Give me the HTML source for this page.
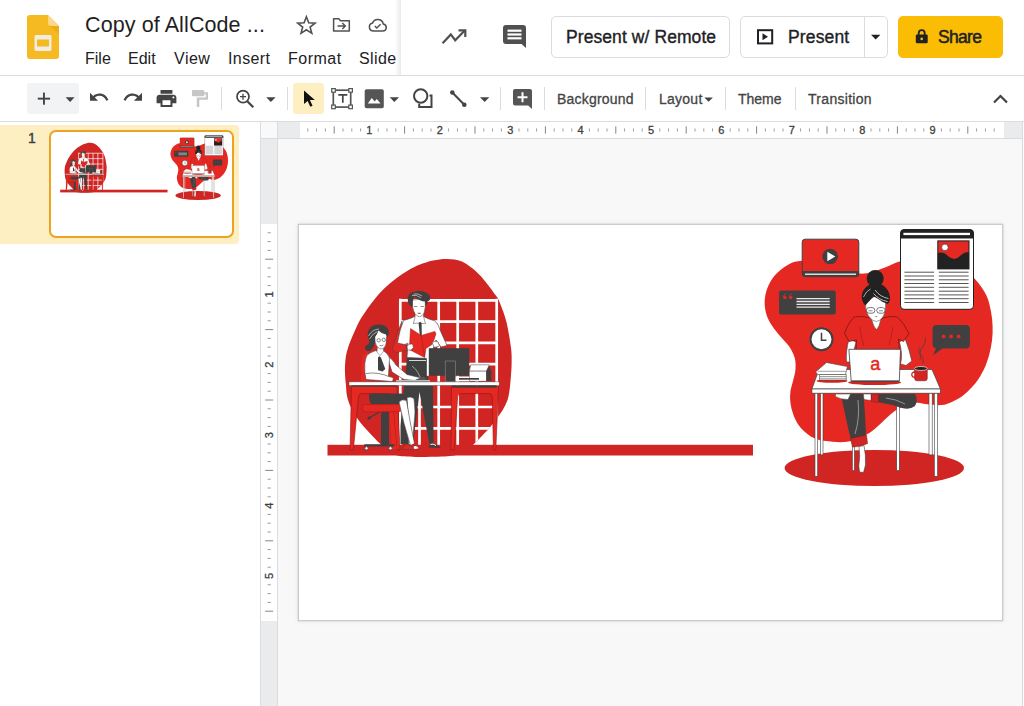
<!DOCTYPE html>
<html>
<head>
<meta charset="utf-8">
<title>Copy of AllCode - Slides</title>
<style>
*{box-sizing:border-box;margin:0;padding:0}
html,body{width:1024px;height:706px;overflow:hidden;background:#fff;font-family:"Liberation Sans",sans-serif;color:#202124}
.abs{position:absolute}
#hdr{position:absolute;left:0;top:0;width:1024px;height:76px;background:#fff;border-bottom:1px solid #dadce0}
#hdrshadow{position:absolute;left:395px;top:0;width:6px;height:75px;background:linear-gradient(to right,rgba(255,255,255,0),rgba(90,90,90,.13))}
.title{position:absolute;left:85px;top:11.500px;font-size:21.500px;line-height:26px;white-space:nowrap;color:#1f1f1f;letter-spacing:.1px}
.menu{position:absolute;top:48.500px;font-size:16px;line-height:20px;white-space:nowrap;color:#202124}
.btn{position:absolute;top:16px;height:42px;border:1px solid #dadce0;border-radius:5px;background:#fff;font-size:17.500px;line-height:41px;white-space:nowrap;color:#202124;-webkit-text-stroke:.35px #202124}
#tb{position:absolute;left:0;top:76px;width:1024px;height:46px;background:#fff;border-bottom:1px solid #dadce0}
.sep{position:absolute;top:11px;width:1px;height:23px;background:#dadce0}
.tbt{position:absolute;top:12.700px;font-size:14px;line-height:20px;color:#444;white-space:nowrap;-webkit-text-stroke:.3px #444}
#film{position:absolute;left:0;top:122px;width:260px;height:584px;background:#fff}
#canvas{position:absolute;left:260px;top:122px;width:763px;height:584px;background:#f8f8f8;border-left:1px solid #dadce0;border-right:1px solid #dadce0;overflow:hidden}
#slide{position:absolute;left:299.200px;top:224.500px;width:703.100px;height:395.600px;background:#fff;box-shadow:0 0 0 1.300px #cbcbcb,0 0 5px 1px rgba(0,0,0,.09)}
</style>
</head>
<body>
<svg style="position:absolute;width:0;height:0" width="0" height="0">
<defs>
<symbol id="slidec" viewBox="299 224 704 396" preserveAspectRatio="none">
<!--SYM-START-->
<clipPath id="blobL"><path id="blobLp" d="M447.2 258.9C451.9 259.0 457.1 259.6 461.3 261.2C465.6 262.8 468.9 265.5 472.7 268.6C476.5 271.7 480.2 275.5 484.0 279.9C487.8 284.2 492.9 291.4 495.3 294.7C497.7 297.9 497.1 296.6 498.4 299.4C499.7 302.2 501.9 307.8 503.3 311.7C504.7 315.6 505.8 319.2 506.7 323.0C507.6 326.8 508.2 330.6 508.9 334.3C509.5 338.0 510.2 341.6 510.6 345.0C511.1 348.4 511.5 350.0 511.6 355.0C511.7 360.0 511.7 367.5 511.0 375.0C510.3 382.5 510.0 392.5 507.5 400.0C505.0 407.5 500.7 413.3 495.8 420.0C490.9 426.7 483.0 435.0 478.0 440.0C473.0 445.0 470.7 447.3 466.0 450.0C461.3 452.7 461.0 455.0 450.0 456.0C439.0 457.0 411.0 457.5 400.0 456.0C389.0 454.5 389.5 451.3 384.0 447.0C378.5 442.7 371.7 435.3 366.9 430.0C362.1 424.7 358.2 420.2 355.0 415.0C351.8 409.8 349.2 404.0 347.7 399.0C346.2 394.0 346.4 389.7 345.9 385.0C345.4 380.3 344.9 375.5 344.9 370.8C344.9 366.1 345.3 360.6 345.9 356.6C346.5 352.6 347.4 349.9 348.3 347.0C349.2 344.1 349.9 342.5 351.3 339.0C352.8 335.5 355.1 329.9 357.0 326.0C358.9 322.1 359.9 320.1 362.7 315.8C365.5 311.5 370.2 304.7 374.0 300.0C377.8 295.3 381.5 291.2 385.3 287.5C389.1 283.8 392.9 280.7 396.7 277.9C400.5 275.1 404.2 272.7 408.0 270.5C411.8 268.3 415.1 266.5 419.3 264.8C423.5 263.1 428.4 261.5 433.0 260.5C437.6 259.5 442.5 258.8 447.2 258.9Z"/></clipPath>
<use href="#blobLp" fill="#d02522"/>
<g clip-path="url(#blobL)" stroke="#fff" stroke-width="2.700" fill="none">
<path d="M400.300 298.700V446M419.500 300V446M438.700 300V446M457.700 300V446M476.800 300V446M496.700 298.700V446"/>
<path d="M399 300.300H498M400 321.600H498M400 342.900H498M400 364.100H498M400 407H498M400 428.300H498"/>
</g>
<rect x="327.500" y="444.800" width="425.500" height="10.700" fill="#d02522"/>
<path d="M361 381.500L361.500 360Q362.500 354 368 352L372 381.500Z" fill="#e62822"/>
<path d="M451.500 386H498.600L495.800 450H493.400L492.300 397Q492.200 393.600 489 393.600H461Q457.800 393.600 457.600 397L454.200 450H451Z" fill="#e62822" stroke="#8a1a17" stroke-width=".6"/>
<path d="M351.500 386H397L400 450H397L392 397Q391.700 393.600 388.500 393.600H362Q358.800 393.600 358.500 397L353.300 450H350Z" fill="#e62822" stroke="#8a1a17" stroke-width=".6"/>
<path d="M391.800 395L396.800 449.500L392 449.500L389.500 412L390.500 395Z" fill="#e62822"/>
<rect x="381" y="410" width="8" height="35.500" fill="#404040"/>
<rect x="364" y="444.300" width="30.500" height="2.300" rx="1" fill="#404040"/>
<circle cx="366.500" cy="448.300" r="1.700" fill="#fff" stroke="#404040" stroke-width=".8"/>
<circle cx="390.500" cy="448.300" r="1.700" fill="#fff" stroke="#404040" stroke-width=".8"/>
<path d="M379.500 412L370 417.500" stroke="#404040" stroke-width="1.200"/>
<ellipse cx="369.300" cy="418" rx="2.200" ry="1.400" transform="rotate(-30 369.300 418)" fill="#404040"/>
<rect x="362" y="404.600" width="40" height="7.200" rx="3.500" fill="#e62822" stroke="#a11a17" stroke-width=".5"/>
<path d="M404 385.500H433L433.600 443.500H429.300L419.500 392L413 444H400.500V426Z" fill="#404040"/>
<path d="M428.600 447.600Q429 443 433 443Q438 445.500 441.300 447.900Z" fill="#404040"/>
<path d="M430.500 444.500Q433 443.200 436 445.500" stroke="#fff" stroke-width="1" fill="none"/>
<path d="M369.500 393.500H401Q405 394 406.500 398.500L404 404H371Q368 399 369.500 393.500Z" fill="#404040"/>
<path d="M407 397.500Q411 396 414 398.500Q416 412 414 425L412.500 444L408.500 444.500Q409 420 407 397.500Z" fill="#fff" stroke="#404040" stroke-width=".6"/>
<path d="M399 402Q402 398.500 406.500 400.500Q409.500 420 414.500 443.500L410.500 445.500Q403 422 399 402Z" fill="#fff" stroke="#404040" stroke-width=".6"/>
<path d="M402.500 449.500Q403 445 407 444.500L412 447Q416 444 419.300 448.500Q415 450.500 411 449.500Z" fill="#e62822" stroke="#404040" stroke-width=".5"/>
<path d="M413.500 446.500Q416.500 445 418.800 448.300L414.500 449.300Z" fill="#fff"/>
<path d="M407 357H428V386H404.500Z" fill="#404040"/>
<path d="M409 360.500H426" stroke="#fff" stroke-width=".8"/>
<path d="M412 366Q419 371 421 381" stroke="#ddd" stroke-width=".6" fill="none"/>
<path d="M402 321Q398 330 395 340L392.500 348.500Q393 352 397 352.500L407 350L406 345L400 344Z" fill="#e62822" stroke="#404040" stroke-width=".5"/>
<path d="M403.500 320.500Q411 318.500 414.500 316.500L423.500 316.500Q428 319 435 321Q438.500 324 440.500 331L447 345.500L441 347L436 340L430 358.500L407 357.500L408 343L404.500 344.500L397.500 343Q399.500 330 403.500 320.500Z" fill="#fff" stroke="#404040" stroke-width=".6"/>
<path d="M415.500 311L415 318L419.500 323L423.500 318V311Z" fill="#fff" stroke="#404040" stroke-width=".4"/>
<path d="M412.300 300Q412 309 415 313.500Q417.500 316.800 419.500 316.800Q422 316.800 424 313Q425.800 308 425.300 299Z" fill="#fff" stroke="#404040" stroke-width=".5"/>
<path d="M414 306.500h3.300M420.600 306.500h3.300" stroke="#404040" stroke-width=".6"/>
<path d="M417.800 313.300h2.800" stroke="#404040" stroke-width=".9"/>
<path d="M411.500 307Q407 303 407.800 297.500Q409 292 415 291.500Q419 290.200 423 291.500Q428.500 292.500 430.300 297Q430.500 300.500 427.500 301.500Q427.500 304.500 425.500 306L425 301.500Q420 301.500 414.500 296.500Q412.300 300.500 412.600 305Z" fill="#404040"/>
<path d="M412 295.500Q416 294 421 298M413.500 294Q418 293 422 296" stroke="#eee" stroke-width=".6" fill="none"/>
<path d="M415 317.500L413.300 323.500L419.500 323L425.500 323.800L423.800 317.500" fill="#fff" stroke="#404040" stroke-width=".5"/>
<path d="M418.600 323L420.200 321.800L421.600 323.200L421.800 336.500L420 337.500Z" fill="#404040"/>
<path d="M410.500 328.600L421.200 335.400L434.800 331.400L436 333.700L432.600 344L426 348.500L424.600 357.500L409.300 349.600Z" fill="#e62822" stroke="#9c1a17" stroke-width=".5"/>
<path d="M421.200 335.400L424.600 357" stroke="#9c1a17" stroke-width=".5"/>
<path d="M407 346Q409 343.500 412.500 344L413.500 347.500L411 350L407.500 350Z" fill="#fff" stroke="#404040" stroke-width=".5"/>
<path d="M432 342.500Q435 340.500 438 342L439.500 346L434.500 347.500Z" fill="#fff" stroke="#404040" stroke-width=".5"/>
<path d="M387 356Q392 358 396 365L407 374.500L419.500 377.500L421 380L415 380.500L404 379.500L392 372Z" fill="#fff" stroke="#404040" stroke-width=".6"/>
<path d="M376 350.500Q369 352.500 366.500 356Q364 362 364.800 372L366 379.500L392.500 381.500L393.500 378L388.500 376L389.500 358Q388 353 383 350.500L380 354Z" fill="#fff" stroke="#404040" stroke-width=".6"/>
<path d="M366 373.500Q378 371.500 390 377" stroke="#404040" stroke-width=".6" fill="none"/>
<path d="M378 357.300L379.800 356.300L381 357.800L385.300 369L382.500 371.500L378 370.200Z" fill="#404040"/>
<path d="M377.500 346L377 352L380 355.500L383.500 351.500V346Z" fill="#fff" stroke="#404040" stroke-width=".4"/>
<path d="M375 336Q374.300 343 377 346.500Q379.500 349.300 382 349Q385 348 386 344Q386.800 339.500 386 334.500Z" fill="#fff" stroke="#404040" stroke-width=".5"/>
<path d="M375 337.500L377.800 330L387.500 331.500L386.300 337.500Z" fill="#fff"/>
<circle cx="378.700" cy="340.300" r="1.700" fill="none" stroke="#404040" stroke-width=".6"/>
<circle cx="383.700" cy="339.800" r="1.700" fill="none" stroke="#404040" stroke-width=".6"/>
<path d="M379.500 345.300Q381.500 346.500 383.500 345" stroke="#404040" stroke-width=".6" fill="none"/>
<path d="M375 343Q374 348 370.500 350.800Q366.500 352 365 348.500Q364.500 345.500 367.500 345Q369.500 344 369 340Q366 333 370 328Q374 324 380 324.600Q386 325 388.500 330Q389.800 334 387 337.500L386 334.500Q381 333.500 378.500 330.500Q377 335 375 337Z" fill="#404040"/>
<path d="M368.500 336Q372 329.500 379 329M369.500 339Q373 333 377.500 331.500" stroke="#eee" stroke-width=".6" fill="none"/>
<rect x="426.800" y="348.200" width="2.200" height="27.600" fill="#fff"/>
<rect x="428.800" y="348.200" width="40.400" height="27.600" fill="#404040"/>
<rect x="445.200" y="361" width="10.400" height="20.800" fill="#404040" stroke="#999" stroke-width=".5"/>
<path d="M455.600 376.500H470V381.500H455.600Z" fill="#fff"/>
<path d="M470.800 364.800H489.300L486.400 371.100H469.300Z" fill="#fff" stroke="#404040" stroke-width=".5"/>
<rect x="469.300" y="371.100" width="17.100" height="10" fill="#fff" stroke="#404040" stroke-width=".4"/>
<path d="M486.400 371.600L489.300 366L491.300 371.600V381H486.400Z" fill="#404040"/>
<rect x="459" y="378" width="20" height="1.700" fill="#404040"/>
<path d="M414 380.500L423 376.500L427 379L420 381.800Z" fill="#555"/>
<rect x="396" y="380" width="34" height="1.800" fill="#bbb"/>
<rect x="349" y="381.900" width="150.200" height="3.500" fill="#fff" stroke="#555" stroke-width=".5"/>
<rect x="452.200" y="385.500" width="44.500" height="2.200" fill="#404040"/>
<rect x="352" y="385.500" width="45" height="1.200" fill="#404040"/>
<path d="M801.7 260.8C796.5 261.1 793.0 262.2 789.0 264.2C785.0 266.2 780.9 269.3 777.6 272.6C774.3 275.9 771.3 279.8 769.2 284.0C767.1 288.2 765.5 293.4 764.9 298.1C764.3 302.8 764.8 308.1 765.8 312.3C766.8 316.6 768.4 319.8 770.6 323.6C772.8 327.4 776.0 331.1 779.1 334.9C782.2 338.7 786.4 342.4 789.0 346.2C791.6 350.0 793.5 353.8 794.6 357.6C795.7 361.4 795.7 365.1 795.5 368.9C795.3 372.7 794.1 376.4 793.2 380.2C792.4 384.0 790.9 387.7 790.4 391.5C789.9 395.3 789.9 399.0 790.4 402.8C790.9 406.6 791.8 410.4 793.2 414.2C794.6 418.0 796.5 422.2 798.9 425.5C801.3 428.8 804.8 431.9 807.4 434.0C810.0 436.1 811.3 437.0 814.4 438.2C817.5 439.4 820.4 440.5 825.8 441.1C831.2 441.7 840.2 442.9 847.0 441.8C853.8 440.7 861.5 437.0 866.7 434.4C871.9 431.8 874.0 429.4 878.0 426.0C882.0 422.6 886.7 417.3 890.7 414.2C894.7 411.1 897.8 409.0 902.0 407.1C906.2 405.2 911.9 403.3 916.1 402.8C920.4 402.3 923.2 403.9 927.5 404.3C931.8 404.7 937.4 405.6 941.6 405.1C945.8 404.6 949.1 403.2 952.9 401.4C956.7 399.6 960.5 397.5 964.3 394.4C968.1 391.3 972.3 387.2 975.6 383.0C978.9 378.8 981.8 373.6 984.1 368.9C986.4 364.2 987.9 359.4 989.2 354.7C990.5 350.0 991.4 345.3 992.0 340.6C992.6 335.9 992.8 331.1 992.6 326.4C992.5 321.7 992.0 317.0 991.1 312.3C990.2 307.6 989.1 302.4 987.5 298.1C985.9 293.9 983.7 290.3 981.2 286.8C978.7 283.3 976.2 280.0 972.7 276.9C969.2 273.8 965.5 270.5 960.0 268.0C954.5 265.5 946.7 263.5 940.0 262.0C933.3 260.5 926.6 259.1 920.0 259.0C913.4 258.9 906.4 259.9 900.6 261.3C894.8 262.7 889.8 265.7 885.0 267.5C880.2 269.3 876.1 270.9 871.9 271.9C867.6 272.9 864.8 273.9 859.5 273.6C854.2 273.3 846.6 271.9 840.0 270.0C833.4 268.1 826.4 264.0 820.0 262.5C813.6 261.0 806.9 260.5 801.7 260.8Z" fill="#e62822"/>
<ellipse cx="874.300" cy="468" rx="89.700" ry="18" fill="#d02522"/>
<rect x="802.200" y="239.200" width="56.600" height="37.500" rx="3" fill="#e62822" stroke="#404040" stroke-width="1"/>
<path d="M802.200 271H858.800V274.700Q858.800 276.700 856.800 276.700H804.200Q802.200 276.700 802.200 274.700Z" fill="#404040"/>
<rect x="805" y="273.500" width="51" height="1.500" fill="#ddd"/>
<circle cx="830.100" cy="256.500" r="7.800" fill="#404040"/>
<path d="M827.300 251.800V261.200L835.300 256.500Z" fill="#fff"/>
<rect x="779.100" y="290.500" width="56.700" height="24" rx="2" fill="#404040"/>
<circle cx="785" cy="297.600" r="1.700" fill="#e62822"/><circle cx="790.800" cy="297.600" r="1.700" fill="#e62822"/>
<path d="M783.500 297.500Q783.300 294.500 786 293.800M789.300 297.500Q789.100 294.500 791.800 293.800" stroke="#e62822" stroke-width=".9" fill="none"/>
<path d="M796.500 298.700H829.700M796.500 301.500H829.700M796.500 304.300H829.700M796.500 307.100H829.700" stroke="#e8e8e8" stroke-width="1.300"/>
<circle cx="821.500" cy="339.200" r="11" fill="#fff" stroke="#404040" stroke-width="2"/>
<path d="M821.500 332.800V340.300H826.500" stroke="#404040" stroke-width="1.500" fill="none"/>
<rect x="900.500" y="229.500" width="73" height="79.800" rx="3.500" fill="#fff" stroke="#222" stroke-width="1"/>
<path d="M900.500 238.500V233Q900.500 229.500 904 229.500H970Q973.500 229.500 973.500 233V238.500Z" fill="#222"/>
<rect x="903.400" y="232.800" width="66.600" height="2.300" fill="#fff"/>
<rect x="937.800" y="240.900" width="31.200" height="28" fill="#e62822" stroke="#222" stroke-width="1"/>
<path d="M937.800 253.300Q943 251 948 256Q954.400 262 960 256Q965 251 969 252.600V268.900H937.800Z" fill="#222"/>
<circle cx="944.900" cy="247.400" r="3.300" fill="#fff" stroke="#222" stroke-width=".6"/>
<path d="M904.400 272.2H934.100M938.800 272.2H968.600M904.400 276.0H934.100M938.800 276.0H968.600M904.400 279.8H934.100M938.800 279.8H968.600M904.400 283.5H934.100M938.800 283.5H968.600M904.400 287.3H934.100M938.800 287.3H968.600M904.400 291.2H934.100M938.800 291.2H968.600M904.400 294.9H934.100M938.800 294.9H968.600M904.400 298.7H934.100M938.800 298.7H968.600M904.400 302.5H934.100M938.800 302.5H968.600" stroke="#555" stroke-width="1"/>
<path d="M936.600 325H965.900Q969.900 325 969.900 329V344.500Q969.900 348.500 965.900 348.500H942.500L933.100 355.300L936 348.300Q932.600 347.500 932.600 344.500V329Q932.600 325 936.600 325Z" fill="#404040"/>
<circle cx="943.600" cy="336.400" r="1.900" fill="#e62822"/><circle cx="951.100" cy="336.400" r="1.900" fill="#e62822"/><circle cx="958.600" cy="336.400" r="1.900" fill="#e62822"/>
<rect x="820.5" y="393.0" width="2.5" height="61.9" fill="#fff" stroke="#404040" stroke-width=".6"/>
<rect x="929.0" y="393.0" width="3.2" height="61.9" fill="#fff" stroke="#404040" stroke-width=".6"/>
<rect x="852.3" y="440.0" width="2.1" height="30.5" fill="#fff" stroke="#404040" stroke-width=".6"/>
<rect x="896.7" y="406.0" width="2.6" height="64.5" fill="#fff" stroke="#404040" stroke-width=".6"/>
<path d="M840.900 394H863.400Q865 410 866 436.600L851 440Q846 420 840.900 394Z" fill="#404040"/>
<path d="M858 400Q860 418 855 434" stroke="#ccc" stroke-width=".6" fill="none"/>
<path d="M850.300 438.500L866.500 435L867.600 443.500Q860 447.500 852.500 447Z" fill="#d02522" stroke="#8a1a17" stroke-width=".5"/>
<path d="M859 446.500L864 445.500Q866 455 865.500 465L863.500 472.500L859.500 472L858.800 466Q860.500 456 859 446.500Z" fill="#fff" stroke="#404040" stroke-width=".6"/>
<path d="M877.400 394H915Q918.500 400 915 406Q910 410 902 408Q890 404 877.400 402Z" fill="#404040"/>
<path d="M886 398Q896 399 905 404" stroke="#ccc" stroke-width=".6" fill="none"/>
<path d="M871 394H878.500V402.500L871 401.500Z" fill="#d02522" stroke="#8a1a17" stroke-width=".5"/>
<path d="M863.400 394H871V400.500L864 399.500Z" fill="#fff" stroke="#404040" stroke-width=".5"/>
<path d="M835.500 394H850.600L848 399.500Q840 399.500 835.500 396.500Z" fill="#fff" stroke="#404040" stroke-width=".5"/>
<rect x="815.0" y="393.0" width="2.7" height="83.3" fill="#fff" stroke="#404040" stroke-width=".6"/>
<rect x="934.3" y="393.0" width="3.3" height="83.3" fill="#fff" stroke="#404040" stroke-width=".6"/>
<path d="M849 339L856 342L853.500 352L851 362H846.500Q845.500 352 849 339Z" fill="#fff" stroke="#404040" stroke-width=".6"/>
<path d="M899.500 342L905 338.500Q909.500 350 911.800 361L906 365.500L900.500 364Q903 355 899.500 342Z" fill="#fff" stroke="#404040" stroke-width=".6"/>
<path d="M854.100 317Q862 315.500 870 318L876.400 322L883 318Q890 315.500 897.500 317Q904 323 909 333.500L903.500 341.500L898.500 339L899.500 352H856L856.500 340L849 341.500L844.600 333.400Q848 323 854.100 317Z" fill="#e62822" stroke="#6a1412" stroke-width=".7"/>
<path d="M860 327Q861 338 864 346M893 327Q891 338 889 345" stroke="#8a1a17" stroke-width=".5" fill="none"/>
<path d="M871 316L872 320.500Q873.500 327 876.400 329.800Q879.500 327 880.500 320.500L881.500 316Z" fill="#fff" stroke="#404040" stroke-width=".6"/>
<path d="M865.500 303Q865 311 868.500 316Q872.500 321.500 876.400 321.500Q880 321.500 883.500 316Q886.300 311 885.600 302L875 296Z" fill="#fff" stroke="#404040" stroke-width=".5"/>
<rect x="866.500" y="307.600" width="8.300" height="5.600" rx="2.600" fill="none" stroke="#404040" stroke-width=".7"/>
<rect x="876.800" y="307.600" width="8.300" height="5.600" rx="2.600" fill="none" stroke="#404040" stroke-width=".7"/>
<path d="M868.500 310.800h4M879 310.800h4M875.500 316.500h1.800" stroke="#404040" stroke-width=".6"/>
<circle cx="875.200" cy="278.500" r="8.500" fill="#222"/>
<path d="M865.300 305.500Q860.500 300 862 294Q864 287 870 284.500Q876 282.500 882.500 285Q889 289 890 297Q890.300 301.500 888 304Q883 303 879 299.500Q875.500 297 873 296.500Q869.500 301 865.300 305.500Z" fill="#222"/>
<path d="M875 290Q880 297 888.500 298.500M873.500 293.500Q879 300 887.500 301.500" stroke="#ddd" stroke-width=".8" fill="none"/>
<path d="M863.500 297Q866 291 870.500 289" stroke="#ddd" stroke-width=".7" fill="none"/>
<path d="M819 369.500H932L940.400 389H811.900Z" fill="#fff" stroke="#404040" stroke-width=".7"/>
<rect x="811.900" y="389" width="128.500" height="4.200" fill="#fff" stroke="#404040" stroke-width=".7"/>
<ellipse cx="874.600" cy="382.500" rx="26.500" ry="2.600" fill="#d02522"/>
<path d="M848.900 349.300H900.500L899.300 381.200H851.200Z" fill="#fff" stroke="#404040" stroke-width=".8"/>
<path d="M851.200 381.200H899.300" stroke="#404040" stroke-width="1.200"/>
<text x="875.300" y="370.400" font-family="Liberation Sans, sans-serif" font-size="18" fill="#e62822" stroke="#e62822" stroke-width=".5" text-anchor="middle">a</text>
<ellipse cx="832" cy="381" rx="15.500" ry="1.800" fill="#d02522"/>
<path d="M819.500 374.500H846.300V380H819.500Z" fill="#fff" stroke="#404040" stroke-width=".6"/>
<path d="M816 371.500L826.500 362.500L847.400 366.500L845.500 374.500H818.500Q815.500 373.500 816 371.500Z" fill="#fff" stroke="#404040" stroke-width=".6"/>
<path d="M818 371.300H845.800M820 376.500H846M820 378.300H846" stroke="#404040" stroke-width=".5"/>
<path d="M915 372Q911.500 372 911.800 375Q912.200 377.500 915.300 377.300" stroke="#d02522" stroke-width="1.300" fill="none"/>
<path d="M914.600 368.500H927.300V378.500Q927.300 380.800 925 380.800H917Q914.600 380.800 914.600 378.500Z" fill="#d02522" stroke="#7a1512" stroke-width=".5"/>
<ellipse cx="920.950" cy="368.500" rx="6.350" ry="2" fill="#222" stroke="#eee" stroke-width=".7"/>
<path d="M922.900 364Q924.500 360 921.500 356Q918.500 351.500 922 348Q925.500 344.500 925.700 337.500" stroke="#404040" stroke-width=".7" fill="none"/>
<path d="M920 360Q921.500 356.500 919.500 353.500Q917.500 350 920 347" stroke="#404040" stroke-width=".6" fill="none"/>
<!--SYM-END-->
</symbol>
</defs>
</svg>
<!-- HEADER -->
<div id="hdr">
  <svg class="abs" style="left:27px;top:15px" width="32" height="44" viewBox="0 0 32 44">
    <path d="M3 0h18l11 11v30a3 3 0 0 1-3 3H3a3 3 0 0 1-3-3V3a3 3 0 0 1 3-3z" fill="#f5b921"/>
    <path d="M21 0l11 11H24a3 3 0 0 1-3-3z" fill="#fbd787"/>
    <path d="M22 11h10v8z" fill="#e9a315" opacity=".6"/>
    <rect x="7.500" y="20" width="17" height="16" rx="1.500" fill="#f3ece0"/>
    <rect x="10" y="24.500" width="12" height="7" fill="#f5b921"/>
  </svg>
  <div class="title">Copy of AllCode ...</div>
  <div class="menu" style="left:85px">File</div>
  <div class="menu" style="left:128px">Edit</div>
  <div class="menu" style="left:174px;letter-spacing:.5px">View</div>
  <div class="menu" style="left:228px;letter-spacing:.4px">Insert</div>
  <div class="menu" style="left:288px;letter-spacing:.5px">Format</div>
  <div class="menu" style="left:359px;letter-spacing:.4px">Slide</div>
  <div id="hdrshadow"></div>
  <div class="abs" style="left:401px;top:0;width:623px;height:75px;background:#fff"></div>
  <div class="btn" style="left:551px;width:179px;padding-left:14px;letter-spacing:.08px">Present w/ Remote</div>
  <div class="btn" style="left:740px;width:148px;padding-left:47px;letter-spacing:.15px">Present</div>
  <div class="abs" style="left:864px;top:17px;width:1px;height:40px;background:#dadce0"></div>
  <div class="btn" style="left:898px;width:105px;border-color:#fbbc04;background:#fbbc04;padding-left:39px;letter-spacing:-.7px;-webkit-text-stroke:.5px #202124">Share</div>
</div>
<!-- TOOLBAR -->
<div id="tb">
  <div class="abs" style="left:27px;top:7px;width:52px;height:31px;background:#f1f3f4;border-radius:3px"></div>
  <div class="abs" style="left:293px;top:7px;width:31px;height:31px;background:#feefc3;border-radius:3px"></div>
  <div class="sep" style="left:221px"></div>
  <div class="sep" style="left:287px"></div>
  <div class="sep" style="left:500px"></div>
  <div class="sep" style="left:544px"></div>
  <div class="sep" style="left:645px"></div>
  <div class="sep" style="left:725px"></div>
  <div class="sep" style="left:795px"></div>
  <div class="tbt" style="left:557px;letter-spacing:.2px">Background</div>
  <div class="tbt" style="left:659px;letter-spacing:.25px">Layout</div>
  <div class="tbt" style="left:738px">Theme</div>
  <div class="tbt" style="left:808px;letter-spacing:.3px">Transition</div>
</div>

<!-- ICONS OVERLAY -->
<svg class="abs" style="left:0;top:0" width="1024" height="122" viewBox="0 0 1024 122">
  <!-- header icons -->
  <g fill="none" stroke="#505050" stroke-width="2">
    <path d="M306.4 16.7 L308.7 22.7 L315.1 23.1 L310.1 27.1 L311.8 33.3 L306.4 29.8 L301.0 33.3 L302.7 27.1 L297.7 23.1 L304.1 22.7z" stroke-width="1.600" stroke-linejoin="miter"/>
    <path d="M442.600 43.300L450.800 34.400 455.200 40.200 464.500 30.800" stroke-width="2.200"/>
    <path d="M458.500 30.300H465.300V37" stroke-width="2.200"/>
  </g>
  <path d="M506 25h17a3 3 0 0 1 3 3v20l-4.500-4H506a3 3 0 0 1-3-3V28a3 3 0 0 1 3-3z" fill="#505050"/>
  <g fill="#fff"><rect x="507.500" y="29.600" width="14" height="2.200"/><rect x="507.500" y="33.400" width="14" height="2.200"/><rect x="507.500" y="37.200" width="14" height="2.200"/></g>
  <!-- present icon -->
  <rect x="758" y="30.200" width="14.200" height="13.200" fill="none" stroke="#202124" stroke-width="2"/>
  <path d="M762.500 33.300v7l5.500-3.500z" fill="#202124"/>
  <path d="M871 34.800h9.400l-4.700 4.700z" fill="#202124"/>
  <!-- lock -->
  <path d="M917 34.500h9.500a1.200 1.200 0 0 1 1.200 1.200v6.400a1.200 1.200 0 0 1-1.200 1.200H917a1.200 1.200 0 0 1-1.200-1.200v-6.400a1.200 1.200 0 0 1 1.200-1.200z" fill="#202124"/>
  <path d="M918.700 35v-1.800a3 3 0 0 1 6 0V35" fill="none" stroke="#202124" stroke-width="1.800"/>
  <circle cx="921.700" cy="38.900" r="1.300" fill="#fbbc04"/>
  <!-- toolbar icons -->
  <g fill="#444">
    <rect x="37.800" y="97.700" width="12.300" height="1.900"/><rect x="43" y="92.600" width="1.900" height="12.100"/>
    <path d="M65.600 97.200h9l-4.500 4.700z"/>
    <path d="M266.200 97.200h9.400l-4.700 4.800z"/>
    <path d="M389.700 97.200h9.300l-4.650 4.700z"/>
    <path d="M480 97.300h9.300l-4.650 4.800z"/>
    <path d="M704.300 97.500h8.600l-4.300 4.300z"/>
    <g transform="translate(88.200 86.400) scale(.9)"><path d="M12.500 8c-2.650 0-5.050.99-6.900 2.600L2 7v9h9l-3.620-3.620c1.390-1.160 3.160-1.880 5.120-1.880 3.540 0 6.550 2.310 7.600 5.500l2.370-.78C21.080 11.030 17.150 8 12.500 8z"/></g>
    <g transform="translate(122.200 86.400) scale(.9)"><path d="M18.400 10.600C16.550 8.990 14.150 8 11.500 8c-4.650 0-8.580 3.030-9.960 7.220L3.900 16c1.050-3.190 4.050-5.500 7.600-5.500 1.950 0 3.730.72 5.120 1.880L13 16h9V7l-3.600 3.600z"/></g>
    <g transform="translate(154.600 87.200) scale(.99 .94)"><path d="M19 8H5c-1.660 0-3 1.340-3 3v6h4v4h12v-4h4v-6c0-1.660-1.340-3-3-3zm-3 11H8v-5h8v5zm3-7c-.55 0-1-.45-1-1s.45-1 1-1 1 .45 1 1-.45 1-1 1zm-1-9H6v4h12V3z"/></g>
  </g>
  <!-- paint format (disabled) -->
  <g fill="#c6c6c6">
    <rect x="192" y="90" width="12.200" height="6.200" rx=".8"/>
    <path d="M204 92.200h4v7.500h-8.700v7.300h-2.500v-9.400h9v-3.300H204z"/>
  </g>
  <!-- zoom -->
  <g fill="none" stroke="#444">
    <circle cx="243" cy="96.700" r="6" stroke-width="1.700"/>
    <path d="M247.300 101.200l6 6" stroke-width="2.200"/>
    <path d="M240 96.700h6M243 93.700v6" stroke-width="1.300"/>
  </g>
  <!-- cursor -->
  <path d="M304 90.400v13.700l3.600-3.200 2.700 5.900 2.300-1.100-2.700-5.700h4.900z" fill="#111"/>
  <!-- textbox -->
  <g fill="none" stroke="#555" stroke-width="1.700">
    <rect x="333.300" y="90.200" width="17.400" height="16.900"/>
  </g>
  <g fill="#fff" stroke="#555" stroke-width="1.200">
    <rect x="331.700" y="88.600" width="3.600" height="3.600"/><rect x="348.800" y="88.600" width="3.600" height="3.600"/>
    <rect x="331.700" y="105.100" width="3.600" height="3.600"/><rect x="348.800" y="105.100" width="3.600" height="3.600"/>
  </g>
  <path d="M338.300 94h9v1.700h-3.650v7.100h-1.700v-7.100h-3.650z" fill="#444"/>
  <!-- image -->
  <rect x="364.700" y="89.200" width="19.100" height="19" rx="1.800" fill="#555"/>
  <path d="M367.800 103.400l4-5.300 2.800 3.500 2.200-2.600 3.700 4.400z" fill="#fff"/>
  <!-- shape -->
  <g fill="none" stroke="#444" stroke-width="2">
    <circle cx="420.700" cy="96" r="6.700"/>
    <path d="M429.500 95.400h2v11.600h-12.300v-3.200"/>
  </g>
  <!-- line -->
  <path d="M452.300 92.500l12 12.200" stroke="#444" stroke-width="2" fill="none"/>
  <circle cx="452.300" cy="92.500" r="2.300" fill="#444"/><circle cx="464.300" cy="104.700" r="2.300" fill="#444"/>
  <!-- add comment -->
  <path d="M515 89h15a2 2 0 0 1 2 2v18l-3.800-3.600H515a2 2 0 0 1-2-2V91a2 2 0 0 1 2-2z" fill="#555"/>
  <path d="M517.500 96.300h4v-4h2v4h4v2h-4v4h-2v-4h-4z" fill="#fff"/>
  <!-- chevron up -->
  <path d="M994 102.500l6.500-6.500 6.500 6.500" fill="none" stroke="#444" stroke-width="2.200"/>
  <!-- move to folder -->
  <g fill="none" stroke="#505050" stroke-width="1.500">
    <path d="M333.600 18.800h5.200l1.700 1.900h8.800v10.400h-15.700z" stroke-linejoin="round"/>
    <path d="M337.500 26h7.800M342.300 23l3 3-3 3"/>
    <path d="M373.500 31h9.300a3.500 3.500 0 0 0 .5-6.950 5.600 5.600 0 0 0-10.700-1.150 4.100 4.100 0 0 0 .9 8.100z"/>
    <path d="M374.800 26l2 2 3.800-3.800"/>
  </g>
</svg>
<!-- FILMSTRIP -->
<div id="film">
  <div class="abs" style="left:0;top:2.500px;width:238.500px;height:119px;background:#feefc3;border-radius:0 4px 4px 0"></div>
  <div class="abs" style="left:28px;top:8px;font-size:14px;line-height:16px;color:#3c4043;-webkit-text-stroke:.4px #3c4043">1</div>
  <div class="abs" id="thumb" style="left:49px;top:8px;width:185px;height:108px;border:2px solid #eea320;border-radius:7px;background:#fff;overflow:hidden"><svg class="abs" style="left:2.400px;top:1.800px" width="177.600" height="99.900"><use href="#slidec" x="0" y="0" width="177.600" height="99.900"/></svg></div>
</div>
<!-- CANVAS -->
<div id="canvas">
  <!-- rulers -->
  <div class="abs" style="left:0;top:0;width:762px;height:17px;background:#eaebed;border-bottom:1px solid #dadce0"></div>
  <div class="abs" style="left:0;top:0;width:17px;height:584px;background:#eaebed;border-right:1px solid #dadce0"></div>
  <div class="abs" style="left:0;top:0;width:17px;height:17px;background:#f8f9fa;border-right:1px solid #dadce0;border-bottom:1px solid #dadce0"></div>
  <div class="abs" style="left:39px;top:0;width:704px;height:16px;background:#fff"></div>
  <div class="abs" style="left:0;top:102px;width:16px;height:397px;background:#fff"></div>
</div>
<svg class="abs" style="left:0;top:0;pointer-events:none" width="1024" height="706" viewBox="0 0 1024 706">
<path d="M307.8 128.400V131.500M316.6 128.400V131.500M325.4 128.400V131.500M343.0 128.400V131.500M351.8 128.400V131.500M360.6 128.400V131.500M378.2 128.400V131.500M387.0 128.400V131.500M395.8 128.400V131.500M413.4 128.400V131.500M422.2 128.400V131.500M431.0 128.400V131.500M448.6 128.400V131.500M457.4 128.400V131.500M466.2 128.400V131.500M483.8 128.400V131.500M492.6 128.400V131.500M501.4 128.400V131.500M519.0 128.400V131.500M527.8 128.400V131.500M536.6 128.400V131.500M554.2 128.400V131.500M563.0 128.400V131.500M571.8 128.400V131.500M589.4 128.400V131.500M598.2 128.400V131.500M607.0 128.400V131.500M624.6 128.400V131.500M633.4 128.400V131.500M642.2 128.400V131.500M659.8 128.400V131.500M668.6 128.400V131.500M677.4 128.400V131.500M695.0 128.400V131.500M703.8 128.400V131.500M712.6 128.400V131.500M730.2 128.400V131.500M739.0 128.400V131.500M747.8 128.400V131.500M765.4 128.400V131.500M774.2 128.400V131.500M783.0 128.400V131.500M800.6 128.400V131.500M809.4 128.400V131.500M818.2 128.400V131.500M835.8 128.400V131.500M844.6 128.400V131.500M853.4 128.400V131.500M871.0 128.400V131.500M879.8 128.400V131.500M888.6 128.400V131.500M906.2 128.400V131.500M915.0 128.400V131.500M923.8 128.400V131.500M941.4 128.400V131.500M950.2 128.400V131.500M959.0 128.400V131.500M976.6 128.400V131.500M985.4 128.400V131.500M994.2 128.400V131.500" stroke="#9aa0a6" stroke-width="1"/>
<path d="M334.2 126.300V133.700M404.6 126.300V133.700M475.0 126.300V133.700M545.4 126.300V133.700M615.8 126.300V133.700M686.2 126.300V133.700M756.6 126.300V133.700M827.0 126.300V133.700M897.4 126.300V133.700M967.8 126.300V133.700" stroke="#80868b" stroke-width="1"/>
<path d="M267.500 232.8H270.900M267.500 241.6H270.900M267.500 250.4H270.900M267.500 268.0H270.900M267.500 276.8H270.900M267.500 285.6H270.900M267.500 303.2H270.900M267.500 312.0H270.900M267.500 320.8H270.900M267.500 338.4H270.900M267.500 347.2H270.900M267.500 356.0H270.900M267.500 373.6H270.900M267.500 382.4H270.900M267.500 391.2H270.900M267.500 408.8H270.900M267.500 417.6H270.900M267.500 426.4H270.900M267.500 444.0H270.900M267.500 452.8H270.900M267.500 461.6H270.900M267.500 479.2H270.900M267.500 488.0H270.900M267.500 496.8H270.900M267.500 514.4H270.900M267.500 523.2H270.900M267.500 532.0H270.900M267.500 549.6H270.900M267.500 558.4H270.900M267.500 567.2H270.900M267.500 584.8H270.900M267.500 593.6H270.900M267.500 602.4H270.900" stroke="#9aa0a6" stroke-width="1"/>
<path d="M265.200 259.2H273.200M265.200 329.6H273.200M265.200 400.0H273.200M265.200 470.4H273.200M265.200 540.8H273.200M265.200 611.2H273.200" stroke="#80868b" stroke-width="1"/>
<g font-family="Liberation Sans, sans-serif" font-size="11" fill="#3c4043" stroke="#3c4043" stroke-width=".3" text-anchor="middle">
<text x="369.4" y="133.800">1</text>
<text x="439.8" y="133.800">2</text>
<text x="510.2" y="133.800">3</text>
<text x="580.6" y="133.800">4</text>
<text x="651.0" y="133.800">5</text>
<text x="721.4" y="133.800">6</text>
<text x="791.8" y="133.800">7</text>
<text x="862.2" y="133.800">8</text>
<text x="932.6" y="133.800">9</text>
<text transform="translate(273.300 294.4) rotate(-90)">1</text>
<text transform="translate(273.300 364.8) rotate(-90)">2</text>
<text transform="translate(273.300 435.2) rotate(-90)">3</text>
<text transform="translate(273.300 505.6) rotate(-90)">4</text>
<text transform="translate(273.300 576.0) rotate(-90)">5</text>
</g></svg>
<div id="slide"></div>
<div class="abs" style="left:299px;top:224px;width:704px;height:396px"><svg class="abs" style="left:0;top:0" width="704" height="396"><use href="#slidec" x="0" y="0" width="704" height="396"/></svg></div>
</body>
</html>
